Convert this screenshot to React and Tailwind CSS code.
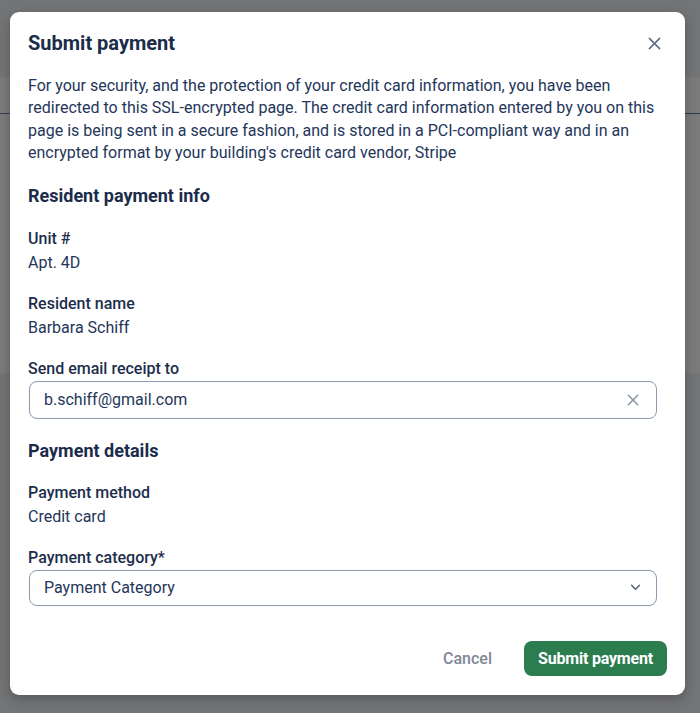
import React from "react";

function XIcon({ className }) {
  return (
    <svg viewBox="0 0 14 14" className={className} fill="none" stroke="currentColor" strokeWidth="1.8" strokeLinecap="round">
      <path d="M1.5 1.5 L12.5 12.5 M12.5 1.5 L1.5 12.5" />
    </svg>
  );
}

function Chevron({ className }) {
  return (
    <svg viewBox="0 0 12 8" className={className} fill="none" stroke="currentColor" strokeWidth="1.8" strokeLinecap="round" strokeLinejoin="round">
      <path d="M1.5 1.5 L6 6 L10.5 1.5" />
    </svg>
  );
}

function Field({ label, value, className = "" }) {
  return (
    <div className={className}>
      <div className="text-[16px] leading-[24px] font-medium text-[#1d2e4b]">{label}</div>
      <div className="text-[16px] leading-[24px] text-[#24365a]">{value}</div>
    </div>
  );
}

export default function App() {
  return (
    <div
      className="relative w-[700px] h-[713px] overflow-hidden"
      style={{ fontFamily: "Roboto, 'Liberation Sans', sans-serif" }}
    >
      <div className="flex flex-col h-full">
        <div className="h-[77px] bg-[#737476]" />
        <div className="h-[296px] bg-[#7b7b7b]">
          <div className="mt-[36px] h-px bg-[#2e3a4e]" />
        </div>
        <div className="flex-1 bg-[#737476]" />
      </div>

      <div className="absolute left-[10px] top-[12px] w-[675px] h-[683px] bg-white rounded-[9px] shadow-[0_4px_12px_rgba(0,0,0,0.25)] flex flex-col px-[18px] pt-[19px] pb-[19px]">
        <div className="flex items-center justify-between h-[24px]">
          <h2 className="text-[20px] leading-[24px] font-bold text-[#1b2c4a]">Submit payment</h2>
          <button className="mr-[6px] text-[#5f7089]">
            <XIcon className="w-[13px] h-[13px]" />
          </button>
        </div>

        <p className="mt-[20px] text-[16px] leading-[22.4px] text-[#24365a]">
          For your security, and the protection of your credit card information, you have been redirected to this SSL-encrypted page. The credit card information entered by you on this page is being sent in a secure fashion, and is stored in a PCI-compliant way and in an encrypted format by your building's credit card vendor, Stripe
        </p>

        <h3 className="mt-[19px] text-[18px] leading-[24px] font-bold text-[#1b2c4a]">Resident payment info</h3>

        <Field className="mt-[19px]" label="Unit #" value="Apt. 4D" />
        <Field className="mt-[17px]" label="Resident name" value="Barbara Schiff" />

        <div className="mt-[17px]">
          <div className="text-[16px] leading-[24px] font-medium text-[#1d2e4b]">Send email receipt to</div>
          <div className="ml-px mr-[10px] h-[38px] rounded-[8px] border border-[#8d9ab0] flex items-center justify-between pl-[14px] pr-[17px]">
            <span className="text-[16px] text-[#24365a]">b.schiff@gmail.com</span>
            <XIcon className="w-[12px] h-[12px] text-[#8a94a5]" />
          </div>
        </div>

        <h3 className="mt-[20px] text-[18px] leading-[24px] font-bold text-[#1b2c4a]">Payment details</h3>

        <Field className="mt-[18px]" label="Payment method" value="Credit card" />

        <div className="mt-[17px]">
          <div className="text-[16px] leading-[24px] font-medium text-[#1d2e4b]">Payment category*</div>
          <div className="ml-px mr-[10px] h-[36px] rounded-[8px] border border-[#8d9ab0] flex items-center justify-between pl-[14px] pr-[15px]">
            <span className="text-[16px] text-[#24365a]">Payment Category</span>
            <Chevron className="w-[11px] h-[7px] text-[#5a6478]" />
          </div>
        </div>

        <div className="mt-auto flex items-center justify-end gap-[32px]">
          <button className="text-[16px] font-medium text-[#7f8896]">Cancel</button>
          <button className="h-[35px] w-[143px] flex items-center justify-center rounded-[8px] bg-[#2b7d50] text-white text-[16px] font-bold tracking-[-0.2px]">
            Submit payment
          </button>
        </div>
      </div>
    </div>
  );
}
